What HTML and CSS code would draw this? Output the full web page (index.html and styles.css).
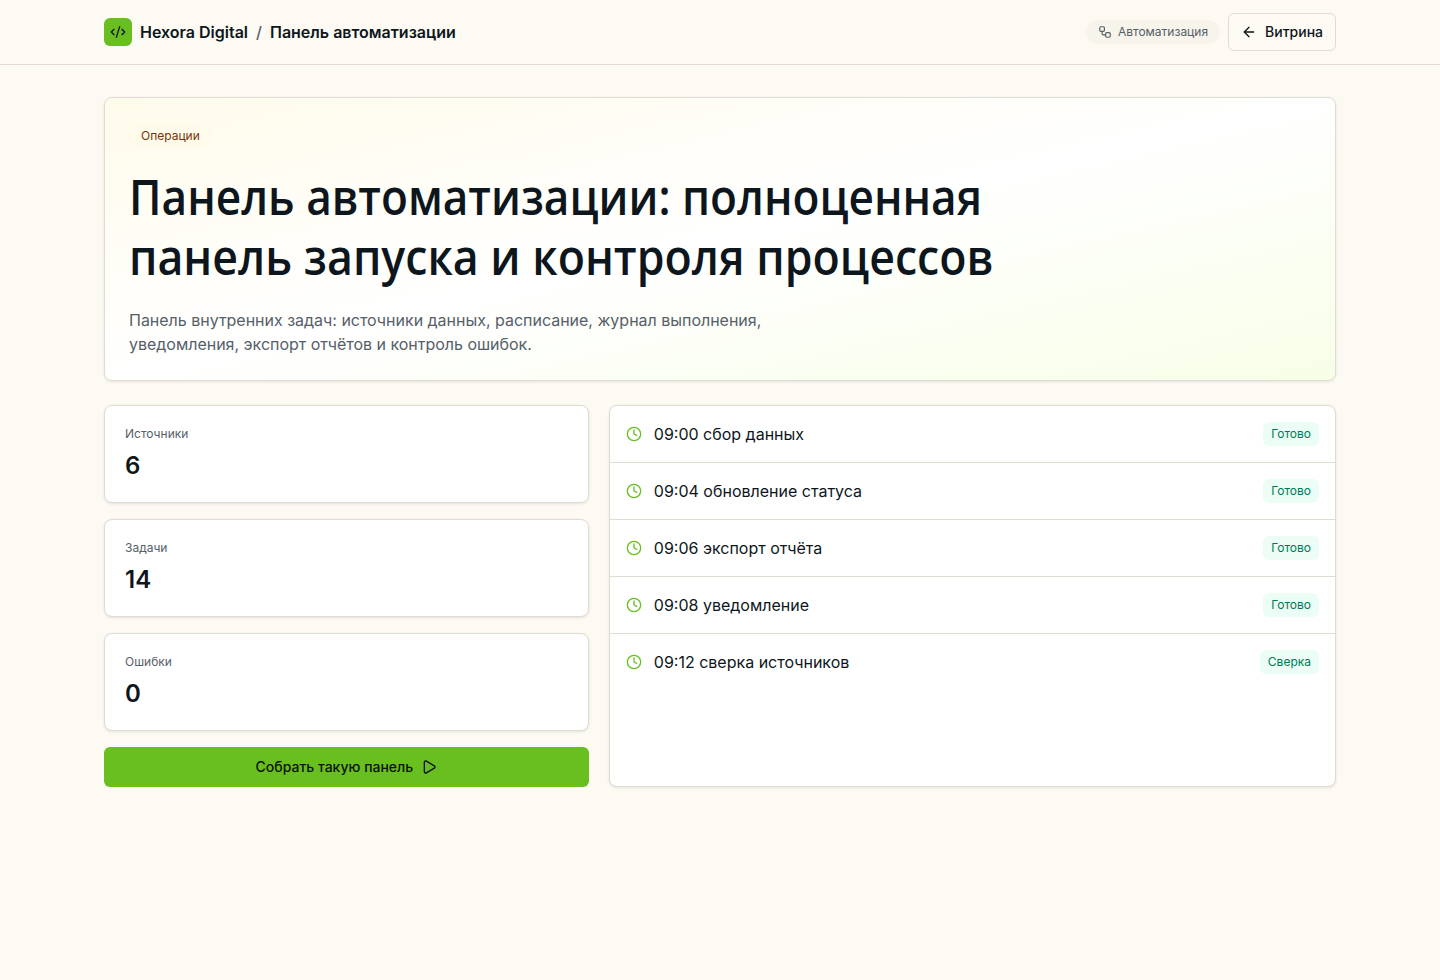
FILE: index.html
```html
<!DOCTYPE html>
<html lang="ru">
  <head>
    <meta charset="UTF-8" />
    <meta name="viewport" content="width=device-width, initial-scale=1.0" />
    <title>Панель автоматизации</title>
    <link rel="stylesheet" href="styles.css">
  </head>
  <body>
    <header class="header">
      <div class="container header-inner">
        <div class="brand">
          <span class="logo">
            <svg class="icon" width="16" height="16" viewBox="0 0 24 24">
              <path d="m18 16 4-4-4-4" />
              <path d="m6 8-4 4 4 4" />
              <path d="m14.5 4-5 16" />
            </svg>
          </span>
          <span>Hexora Digital</span>
          <span class="slash">/</span>
          <span>Панель автоматизации</span>
        </div>
        <div class="header-actions">
          <span class="tag">
            <svg class="icon" width="14" height="14" viewBox="0 0 24 24">
              <rect width="8" height="8" x="3" y="3" rx="2" />
              <path d="M7 11v4a2 2 0 0 0 2 2h4" />
              <rect width="8" height="8" x="13" y="13" rx="2" />
            </svg>
            Автоматизация
          </span>
          <a class="back-button" href="#">
            <svg class="icon" width="16" height="16" viewBox="0 0 24 24">
              <path d="m12 19-7-7 7-7" />
              <path d="M19 12H5" />
            </svg>
            Витрина
          </a>
        </div>
      </div>
    </header>

    <main class="container main">
      <section class="hero">
        <span class="hero-badge">Операции</span>
        <h1>
          <span class="line-first">Панель автоматизации: полноценная</span>
          <span class="line-second">панель запуска и контроля процессов</span>
        </h1>
        <p>Панель внутренних задач: источники данных, расписание, журнал выполнения, уведомления, экспорт отчётов и контроль ошибок.</p>
      </section>

      <section class="dashboard">
        <div class="stats">
          <div class="card stat">
            <div class="stat-label">Источники</div>
            <div class="stat-value">6</div>
          </div>
          <div class="card stat">
            <div class="stat-label">Задачи</div>
            <div class="stat-value">14</div>
          </div>
          <div class="card stat">
            <div class="stat-label">Ошибки</div>
            <div class="stat-value">0</div>
          </div>
          <button class="cta">
            Собрать такую панель
            <svg class="icon" width="16" height="16" viewBox="0 0 24 24">
              <path d="M5 5a2 2 0 0 1 3.008-1.728l11.997 6.998a2 2 0 0 1 .003 3.458l-12 7A2 2 0 0 1 5 19z" />
            </svg>
          </button>
        </div>

        <ul class="card log">
          <li class="log-row">
            <svg class="icon" width="16" height="16" viewBox="0 0 24 24">
              <circle cx="12" cy="12" r="10" />
              <path d="M12 6v6l4 2" />
            </svg>
            <span class="log-text">09:00 сбор данных</span>
            <span class="status">Готово</span>
          </li>
          <li class="log-row">
            <svg class="icon" width="16" height="16" viewBox="0 0 24 24">
              <circle cx="12" cy="12" r="10" />
              <path d="M12 6v6l4 2" />
            </svg>
            <span class="log-text">09:04 обновление статуса</span>
            <span class="status">Готово</span>
          </li>
          <li class="log-row">
            <svg class="icon" width="16" height="16" viewBox="0 0 24 24">
              <circle cx="12" cy="12" r="10" />
              <path d="M12 6v6l4 2" />
            </svg>
            <span class="log-text">09:06 экспорт отчёта</span>
            <span class="status">Готово</span>
          </li>
          <li class="log-row">
            <svg class="icon" width="16" height="16" viewBox="0 0 24 24">
              <circle cx="12" cy="12" r="10" />
              <path d="M12 6v6l4 2" />
            </svg>
            <span class="log-text">09:08 уведомление</span>
            <span class="status">Готово</span>
          </li>
          <li class="log-row">
            <svg class="icon" width="16" height="16" viewBox="0 0 24 24">
              <circle cx="12" cy="12" r="10" />
              <path d="M12 6v6l4 2" />
            </svg>
            <span class="log-text">09:12 сверка источников</span>
            <span class="status">Сверка</span>
          </li>
        </ul>
      </section>
    </main>
  </body>
</html>
```
FILE: styles.css
```css
* {
  padding: 0;
  margin: 0;
  box-sizing: border-box;
}

body {
  min-height: 100vh;
  background-color: #fdfaf3;
  color: #0d161c;
  font-family: Inter, "Liberation Sans", sans-serif;
  font-size: 16px;
  line-height: 24px;
}

.container {
  width: 1232px;
  margin: 0 auto;
}

.icon {
  flex-shrink: 0;
  fill: none;
  stroke: currentColor;
  stroke-width: 2;
  stroke-linecap: round;
  stroke-linejoin: round;
}

.header {
  border-bottom: 1px solid #dedcd3;
}

.header-inner {
  display: flex;
  align-items: center;
  justify-content: space-between;
  height: 64px;
}

.brand {
  display: flex;
  align-items: center;
  gap: 8px;
  font-weight: 600;
}

.logo {
  display: flex;
  align-items: center;
  justify-content: center;
  width: 28px;
  height: 28px;
  border-radius: 6px;
  background-color: #69be20;
}

.slash {
  color: #566069;
  font-weight: 500;
}

.header-actions {
  display: flex;
  align-items: center;
  gap: 8px;
}

.tag {
  display: flex;
  align-items: center;
  gap: 6px;
  padding: 4px 12px;
  border-radius: 999px;
  background-color: #f6f4eb;
  color: #566069;
  font-size: 12px;
  line-height: 16px;
}

.back-button {
  display: flex;
  align-items: center;
  gap: 8px;
  height: 38px;
  padding: 0 12px;
  border: 1px solid #dedcd3;
  border-radius: 6px;
  color: #0d161c;
  font-size: 14px;
  font-weight: 500;
  text-decoration: none;
}

.main {
  padding: 32px 0;
}

.hero {
  display: flex;
  flex-direction: column;
  align-items: flex-start;
  padding: 26px 24px 24px;
  border: 1px solid #dedcd3;
  border-radius: 8px;
  background: linear-gradient(to bottom right, #fffbeb, #ffffff, #f7fee7);
  box-shadow: 0 1px 3px rgba(0, 0, 0, 0.1);
}

.hero-badge {
  padding: 4px 12px;
  border-radius: 999px;
  background-color: #fffbeb;
  color: #7b3306;
  font-size: 12px;
  line-height: 16px;
}

.hero h1 {
  margin-top: 19px;
  font-family: "Open Sans", "Noto Sans", sans-serif;
  font-size: 48px;
  font-weight: 600;
  line-height: 60px;
  white-space: nowrap;
}

/* slightly condensed heading */
.hero h1 span {
  display: block;
  width: max-content;
  transform-origin: left center;
}

.line-first {
  transform: scaleX(0.92);
}

.line-second {
  transform: scaleX(0.931);
}

.hero p {
  max-width: 672px;
  margin-top: 21px;
  color: #566069;
  letter-spacing: -0.015px;
}

.dashboard {
  display: grid;
  grid-template-columns: 2fr 3fr;
  gap: 20px;
  margin-top: 24px;
}

.card {
  border: 1px solid #dedcd3;
  border-radius: 8px;
  background-color: #ffffff;
  box-shadow: 0 1px 3px rgba(0, 0, 0, 0.1);
}

.stats {
  display: flex;
  flex-direction: column;
  gap: 16px;
}

.stat {
  padding: 20px;
}

.stat-label {
  color: #566069;
  font-size: 12px;
  line-height: 16px;
}

.stat-value {
  margin-top: 8px;
  font-size: 24px;
  font-weight: 600;
  line-height: 32px;
}

.cta {
  display: flex;
  align-items: center;
  justify-content: center;
  gap: 8px;
  height: 40px;
  border: none;
  border-radius: 6px;
  background-color: #69be20;
  color: #0a1206;
  font-family: inherit;
  font-size: 14px;
  font-weight: 500;
  line-height: 20px;
  cursor: pointer;
}

.log {
  list-style: none;
}

.log-row {
  display: flex;
  align-items: center;
  gap: 12px;
  padding: 16px;
}

.log-row + .log-row {
  border-top: 1px solid #dedcd3;
}

.log-row .icon {
  color: #69be20;
}

.log-text {
  flex: 1;
}

.status {
  padding: 4px 8px;
  border-radius: 6px;
  background-color: #ecfdf5;
  color: #007a55;
  font-size: 12px;
  line-height: 16px;
}
```
